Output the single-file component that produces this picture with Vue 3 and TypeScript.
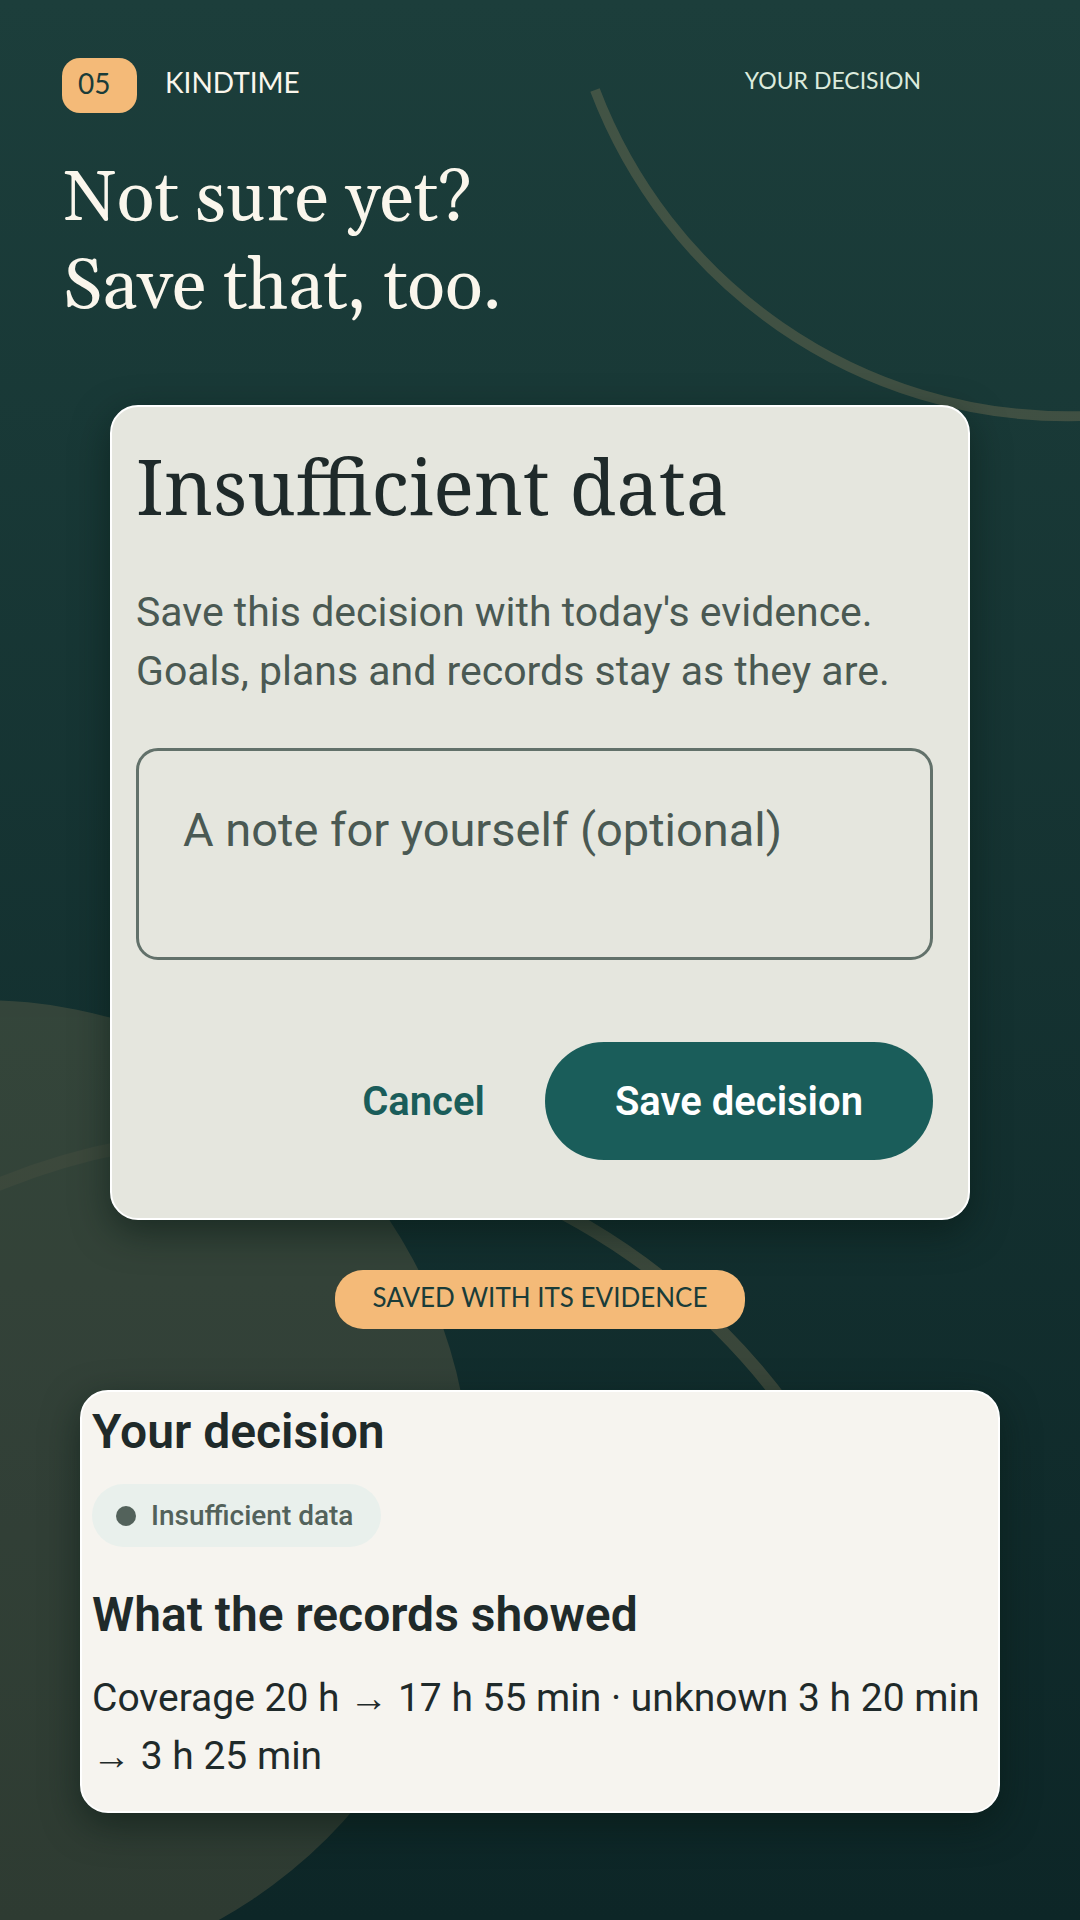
<script setup lang="ts">
import { ref } from 'vue'

const note = ref('')
const step = '05'
const verdict = 'Insufficient data'
</script>

<template>
  <main class="page">
    <svg class="backdrop" viewBox="0 0 1080 1920" preserveAspectRatio="xMidYMid slice" aria-hidden="true">
      <g opacity="0.18">
        <circle cx="-20" cy="1491" r="491" fill="#f4ba78" fill-opacity="0.8" />
        <path d="M595 90A506 506 0 0 0 1541 90" fill="none" stroke="#f4ba78" stroke-width="10" />
        <path d="M-415 1800A665 665 0 0 1 915 1800" fill="none" stroke="#f4ba78" stroke-width="13" />
      </g>
    </svg>

    <header class="top">
      <span class="step">{{ step }}</span>
      <span class="brand">KINDTIME</span>
      <span class="section">YOUR DECISION</span>
    </header>

    <h1 class="headline">Not sure yet?<br />Save that, too.</h1>

    <form class="card dialog" @submit.prevent>
      <h2 class="dialog-title">{{ verdict }}</h2>
      <p class="dialog-text">Save this decision with today's evidence.<br />Goals, plans and records stay as they are.</p>
      <textarea v-model="note" class="note" aria-label="A note for yourself (optional)" placeholder="A note for yourself (optional)"></textarea>
      <div class="actions">
        <button type="button" class="btn cancel">Cancel</button>
        <button type="submit" class="btn save">Save decision</button>
      </div>
    </form>

    <p class="pill">SAVED WITH ITS EVIDENCE</p>

    <section class="card summary">
      <h3 class="summary-title">Your decision</h3>
      <div class="tag"><span class="dot"></span>{{ verdict }}</div>
      <h3 class="summary-title">What the records showed</h3>
      <p class="summary-text">Coverage 20 h → 17 h 55 min · unknown 3 h 20 min → 3 h 25 min</p>
    </section>
  </main>
</template>

<style>
body {
  margin: 0;
  background: #0d2627;
}
</style>

<style scoped>
.page {
  position: relative;
  box-sizing: border-box;
  display: flex;
  flex-direction: column;
  min-height: 100vh;
  padding: 58px 0 107px;
  overflow: hidden;
  background: linear-gradient(#1c3e3b, #0d2627);
  color: #faf6ec;
  font-family: Roboto, "Liberation Sans", sans-serif;
}

.page > * {
  position: relative;
}

.page > .backdrop {
  position: absolute;
  inset: 0;
  width: 100%;
  height: 100%;
}

h1,
h2,
h3,
p {
  margin: 0;
  font-weight: 400;
}

.top {
  display: flex;
  align-items: flex-start;
  padding: 0 159px 0 62px;
  font-family: Lato, sans-serif;
  font-size: 28px;
}

.step {
  box-sizing: border-box;
  width: 75px;
  height: 55px;
  padding-left: 16px;
  border-radius: 18px;
  background: #f4ba78;
  color: #1a3c39;
  line-height: 50px;
}

.brand {
  margin-left: 28px;
  line-height: 48px;
}

.section {
  margin-left: auto;
  color: #dcebdd;
  font-size: 23px;
  line-height: 44px;
}

.headline {
  margin: 43px 63px 0;
  font-family: Georgia, Gelasio, "Noto Serif", "Liberation Serif", serif;
  font-size: 70px;
  line-height: 88px;
}

.card {
  border: 2px solid #fff;
  border-radius: 28px;
  box-shadow: 0 12px 36px rgba(8, 24, 18, 0.55);
  color: #1f2a2a;
}

.dialog {
  margin: 73px 110px 0;
  padding: 31px 35px 58px 24px;
  background: #e5e6de;
}

.dialog-title {
  font-family: "Noto Serif", "Liberation Serif", serif;
  font-size: 76px;
  line-height: 96px;
}

.dialog-text {
  margin-top: 49px;
  color: #4a5953;
  font-size: 41px;
  line-height: 59px;
}

.note {
  display: block;
  box-sizing: border-box;
  width: 100%;
  height: 212px;
  margin-top: 47px;
  padding: 51px 44px;
  border: 3px solid #62716a;
  border-radius: 22px;
  outline: 0;
  background: transparent;
  color: #1f2a2a;
  font: 47px/56px Roboto, sans-serif;
  resize: none;
  overflow: hidden;
}

.note::placeholder {
  color: #4a5953;
  opacity: 1;
}

.actions {
  display: flex;
  justify-content: flex-end;
  margin-top: 82px;
}

.btn {
  height: 118px;
  border: 0;
  border-radius: 59px;
  background: transparent;
  color: #1a5d5a;
  font: 600 40px/48px Roboto, sans-serif;
}

.cancel {
  padding: 2px 60px 0;
}

.save {
  padding: 2px 70px 0;
  background: #1a5d5a;
  color: #fff;
}

.pill {
  align-self: center;
  box-sizing: border-box;
  height: 59px;
  margin-top: 50px;
  padding: 0 38px;
  border-radius: 28px;
  background: #f4ba78;
  color: #1a3c39;
  font-family: Lato, sans-serif;
  font-size: 26px;
  line-height: 54px;
}

.summary {
  margin: 61px 80px 0;
  padding: 12px 10px 26px;
  background: #f6f4ef;
}

.summary-title {
  font-size: 48px;
  font-weight: 600;
  line-height: 56px;
}

.tag {
  display: flex;
  align-items: center;
  gap: 15px;
  width: fit-content;
  height: 63px;
  margin: 24px 0 40px;
  padding: 0 28px 0 24px;
  border-radius: 32px;
  background: #e9f0ec;
  color: #53625b;
  font-size: 28px;
  font-weight: 500;
}

.dot {
  width: 20px;
  height: 20px;
  border-radius: 50%;
  background: #53625b;
}

.summary-text {
  margin-top: 26px;
  font-size: 39px;
  line-height: 58px;
}
</style>
